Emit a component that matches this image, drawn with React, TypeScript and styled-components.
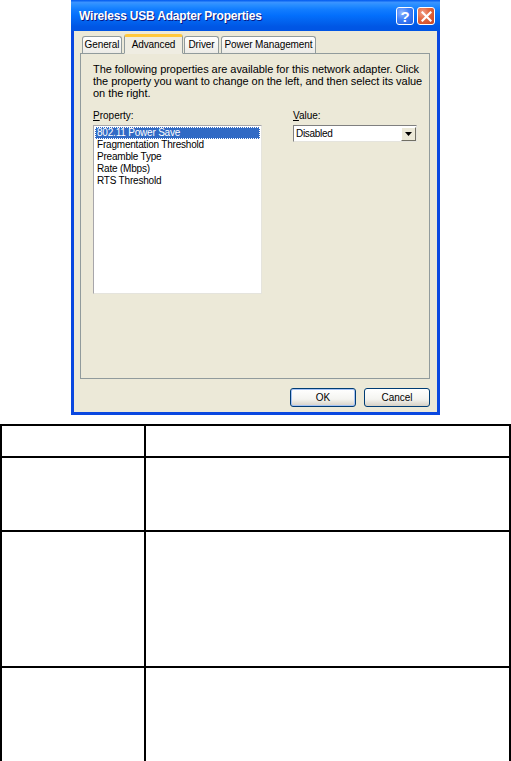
import styled, {createGlobalStyle} from "styled-components";

const GlobalStyle = createGlobalStyle`
  html, body {
    margin: 0;
    padding: 0;
    background: #ffffff;
  }
  body {
    font-family: "Liberation Sans", Arial, sans-serif;
  }
`

const tabs = [
  {label: 'General', width: 40},
  {label: 'Advanced', width: 59, active: true},
  {label: 'Driver', width: 35},
  {label: 'Power Management', width: 95},
];
const properties = ['802.11 Power Save', 'Fragmentation Threshold', 'Preamble Type', 'Rate (Mbps)', 'RTS Threshold'];
const rows = [32, 74, 136, 120];

const App = () => {
  return (
    <Page>
      <GlobalStyle/>
      <Dialog>
        <TitleBar>
          <Title>Wireless USB Adapter Properties</Title>
          <Controls>
            <CaptionButton>?</CaptionButton>
            <CaptionButton $close>
              <svg width="11" height="11" viewBox="0 0 11 11">
                <path d="M1.5 1.5 L9.5 9.5 M9.5 1.5 L1.5 9.5" stroke="#fff" strokeWidth="2.2" strokeLinecap="square"/>
              </svg>
            </CaptionButton>
          </Controls>
        </TitleBar>

        <Body>
          <TabStrip>
            {tabs.map(t => (
              <Tab key={t.label} $active={t.active} $width={t.width}>{t.label}</Tab>
            ))}
          </TabStrip>

          <Panel>
            <Intro>
              The following properties are available for this network adapter. Click<br/>
              the property you want to change on the left, and then select its value<br/>
              on the right.
            </Intro>

            <Fields>
              <Field>
                <Label><u>P</u>roperty:</Label>
                <ListBox>
                  {properties.map((p, i) => (
                    <ListItem key={p} $selected={i === 0}>{p}</ListItem>
                  ))}
                </ListBox>
              </Field>
              <Field>
                <Label><u>V</u>alue:</Label>
                <Combo>
                  <ComboText>Disabled</ComboText>
                  <ComboButton>
                    <svg width="7" height="4" viewBox="0 0 7 4">
                      <path d="M0 0 H7 L3.5 4 Z" fill="#000"/>
                    </svg>
                  </ComboButton>
                </Combo>
              </Field>
            </Fields>
          </Panel>

          <Buttons>
            <PushButton $default>OK</PushButton>
            <PushButton>Cancel</PushButton>
          </Buttons>
        </Body>
      </Dialog>

      <Table>
        <colgroup>
          <col style={{width: 144}}/>
          <col/>
        </colgroup>
        <tbody>
          {rows.map((h, i) => (
            <Row key={i} $height={h}>
              <Cell/>
              <Cell/>
            </Row>
          ))}
        </tbody>
      </Table>
    </Page>
  );
};

const Page = styled.div`
  width: 511px;
  display: flex;
  flex-direction: column;
  align-items: center;
`

const Dialog = styled.div`
  width: 369px;
  display: flex;
  flex-direction: column;
  background: #0a48e0;
`

const TitleBar = styled.div`
  height: 31px;
  display: flex;
  align-items: center;
  justify-content: space-between;
  padding: 0 5px 0 8px;
  box-sizing: border-box;
  background: linear-gradient(to bottom, #0058ee 0%, #3a93ff 8%, #288eff 16%, #127dff 30%, #036ffc 50%, #0262ee 70%, #0057e5 85%, #0054e3 100%);
`

const Title = styled.div`
  color: #ffffff;
  font-size: 12px;
  font-weight: bold;
  letter-spacing: -0.2px;
  text-shadow: 1px 1px #0a1882;
`

const Controls = styled.div`
  display: flex;
  gap: 3px;
  margin-top: 1px;
`

const CaptionButton = styled.div<{ $close?: boolean }>`
  width: 18px;
  height: 18px;
  box-sizing: border-box;
  border: 1px solid #ffffff;
  border-radius: 3px;
  display: flex;
  align-items: center;
  justify-content: center;
  color: #ffffff;
  font-size: 15px;
  font-weight: bold;
  background: ${p => p.$close
    ? 'radial-gradient(circle at 30% 30%, #f2a08a 0%, #e36a43 40%, #c9411f 100%)'
    : 'radial-gradient(circle at 30% 30%, #8fb4ff 0%, #3f7ff7 45%, #1f5de0 100%)'};
`

const Body = styled.div`
  margin: 0 3px 3px 3px;
  background-color: #ece9d8;
  background-image: radial-gradient(#e6dcd4 0.5px, transparent 0.7px);
  background-size: 4px 4px;
  padding: 3px 7px 5px 6px;
  display: flex;
  flex-direction: column;
`

const TabStrip = styled.div`
  display: flex;
  align-items: flex-end;
  padding-left: 2px;
  height: 19px;
  position: relative;
  z-index: 1;
`

const Tab = styled.div<{ $active?: boolean; $width: number }>`
  width: ${p => p.$width}px;
  font-size: 10px;
  letter-spacing: -0.1px;
  text-align: center;
  color: #000;
  white-space: nowrap;
  height: ${p => p.$active ? 20 : 17}px;
  line-height: 15px;
  box-sizing: border-box;
  border: 1px solid #919b9c;
  border-bottom: ${p => p.$active ? '1px solid #efede2' : 'none'};
  border-top: ${p => p.$active ? '3px solid #ffc83c' : '1px solid #919b9c'};
  border-radius: 3px 3px 0 0;
  margin-right: ${p => p.$active ? 1 : 2}px;
  background: ${p => p.$active ? '#efede2' : 'linear-gradient(to bottom, #ffffff, #ecebe6)'};
  margin-bottom: ${p => p.$active ? -1 : 0}px;
`

const Panel = styled.div`
  height: 326px;
  box-sizing: border-box;
  border: 1px solid #919b9c;
  background: transparent;
  padding: 9px 4px 9px 12px;
  display: flex;
  flex-direction: column;
`

const Intro = styled.div`
  font-size: 11px;
  line-height: 12px;
  color: #000;
  white-space: nowrap;
  letter-spacing: -0.05px;
`

const Fields = styled.div`
  display: flex;
  gap: 31px;
  margin-top: 11px;
`

const Field = styled.div`
  display: flex;
  flex-direction: column;
  gap: 3px;
`

const Label = styled.div`
  font-size: 10px;
  line-height: 12px;
  color: #000;
`

const ListBox = styled.div`
  width: 169px;
  height: 169px;
  box-sizing: border-box;
  background: #ffffff;
  border: 1px solid #a7a6aa;
  border-right-color: #e5e4dd;
  border-bottom-color: #e5e4dd;
  padding: 1px;
`

const ListItem = styled.div<{ $selected?: boolean }>`
  font-size: 10px;
  line-height: 12px;
  padding-left: 2px;
  letter-spacing: -0.2px;
  color: ${p => p.$selected ? '#ffffff' : '#000'};
  background: ${p => p.$selected ? '#316ac5' : 'transparent'};
  outline: ${p => p.$selected ? '1px dotted #ffffff' : 'none'};
  outline-offset: -1px;
`

const Combo = styled.div`
  width: 124px;
  height: 17px;
  box-sizing: border-box;
  background: #ffffff;
  border: 1px solid #7f7f7f;
  border-right-color: #e5e4dd;
  border-bottom-color: #e5e4dd;
  display: flex;
  align-items: center;
  justify-content: space-between;
`

const ComboText = styled.div`
  font-size: 10px;
  letter-spacing: -0.3px;
  padding-left: 2px;
  color: #000;
`

const ComboButton = styled.div`
  width: 15px;
  height: 14px;
  box-sizing: border-box;
  background: #ece9d8;
  border: 1px solid #ffffff;
  border-right-color: #716f64;
  border-bottom-color: #716f64;
  display: flex;
  align-items: center;
  justify-content: center;
`

const Buttons = styled.div`
  display: flex;
  justify-content: flex-end;
  gap: 8px;
  margin-top: 9px;
`

const PushButton = styled.div<{ $default?: boolean }>`
  width: 66px;
  height: 19px;
  box-sizing: border-box;
  border: 1px solid #003c74;
  border-radius: 3px;
  font-size: 10px;
  color: #000;
  display: flex;
  align-items: center;
  justify-content: center;
  background: linear-gradient(to bottom, #ffffff 0%, #f4f4f0 60%, #d6d0c5 100%);
  box-shadow: ${p => p.$default ? 'inset 0 0 0 1px #a6c3f5' : 'none'};
`

const Table = styled.table`
  width: 511px;
  margin-top: 9px;
  border-collapse: collapse;
  table-layout: fixed;
`

const Row = styled.tr<{ $height: number }>`
  height: ${p => p.$height}px;
`

const Cell = styled.td`
  border: 2px solid #000;
  padding: 0;
`

export default App;
